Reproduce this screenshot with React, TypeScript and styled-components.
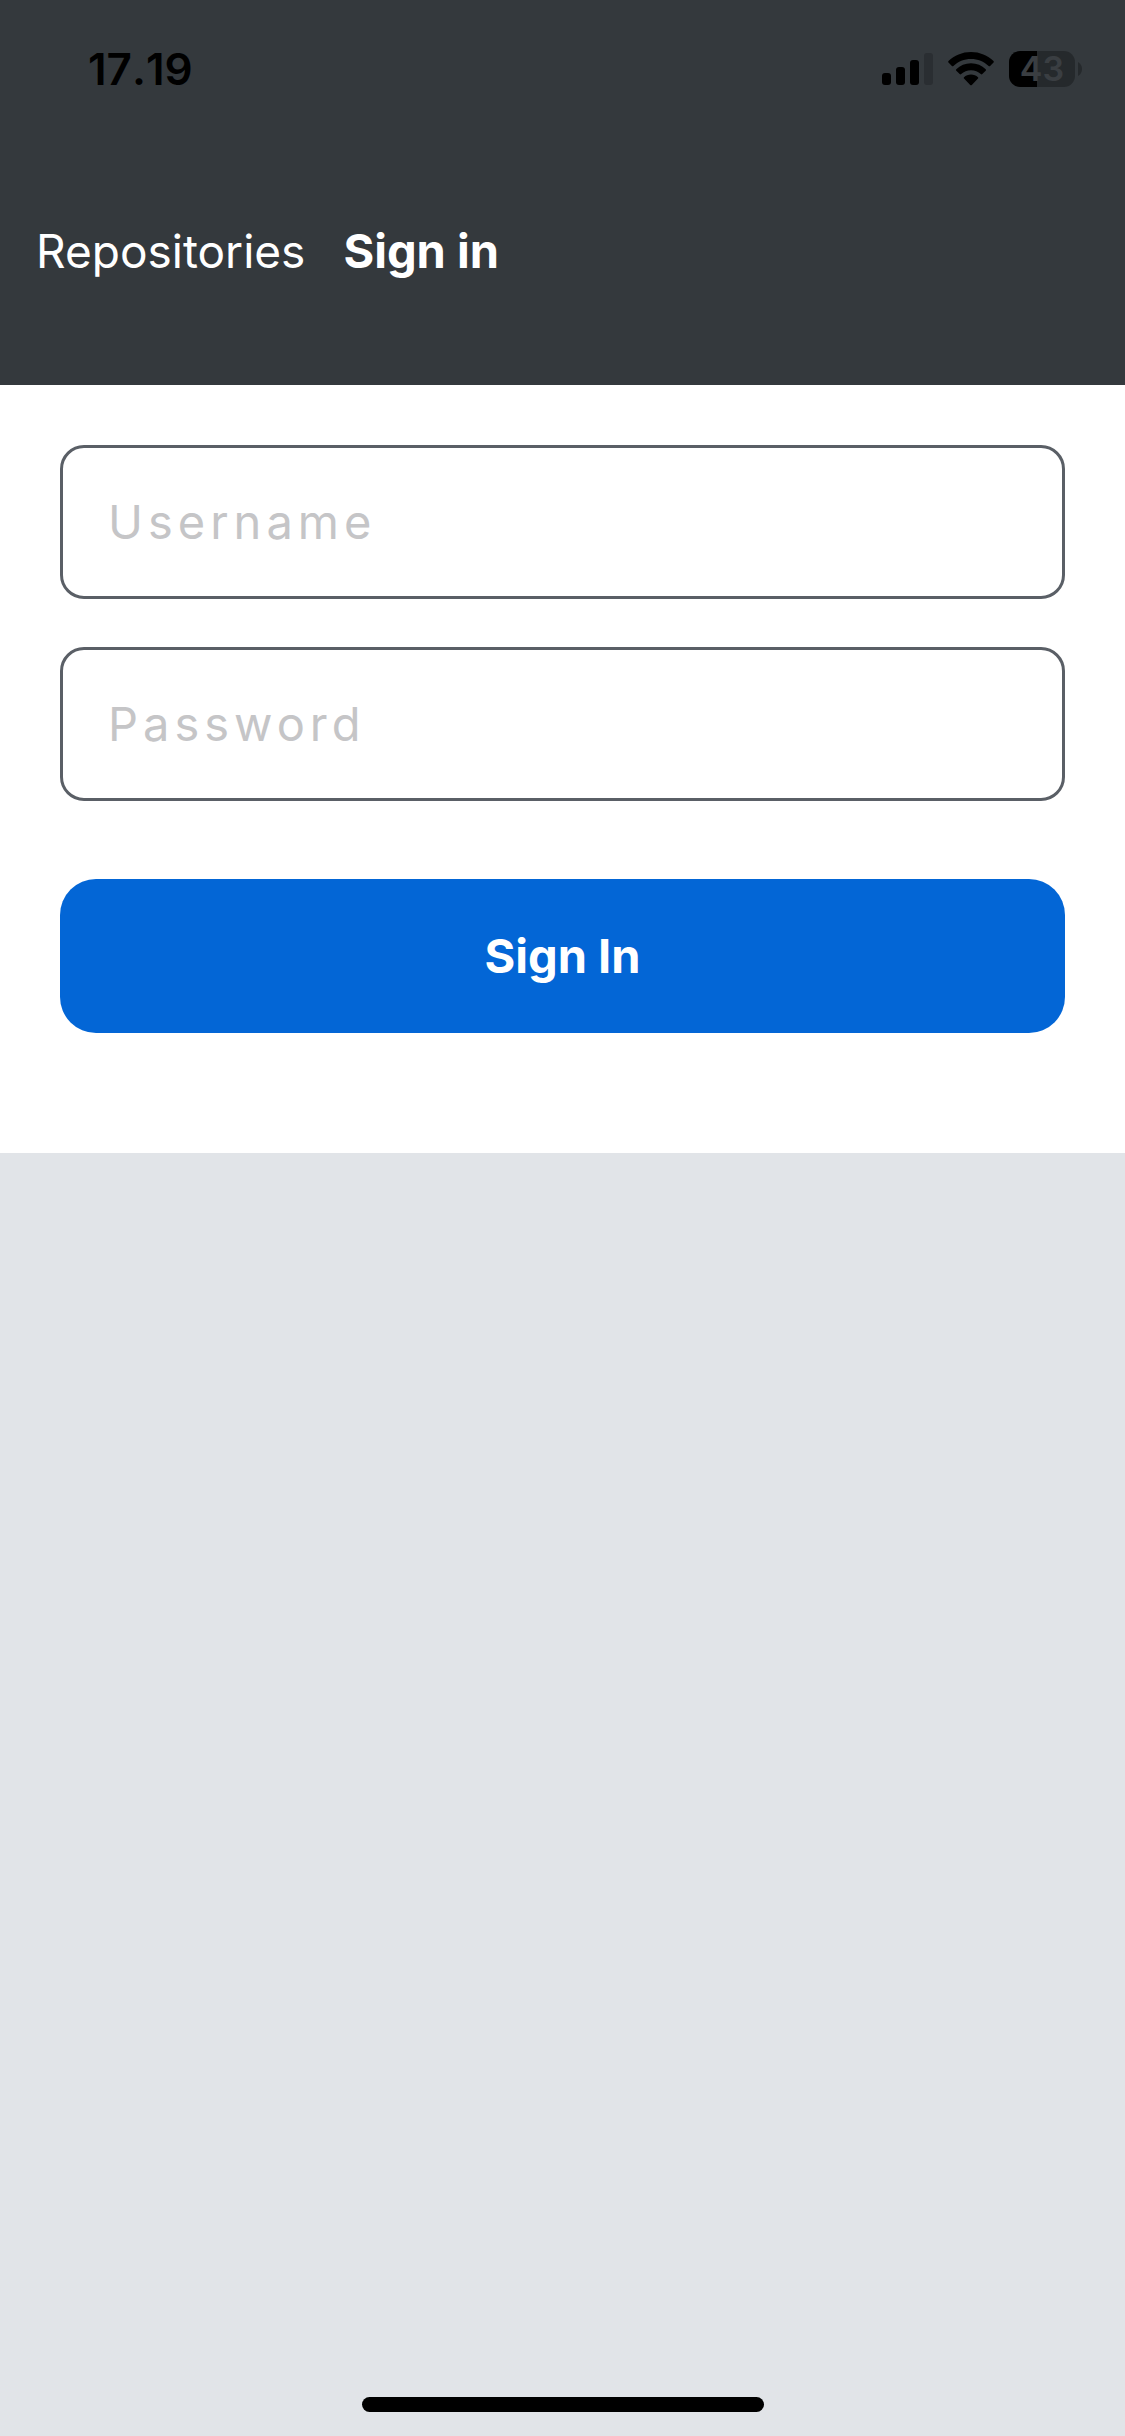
import React, { useState } from "react";
import styled, { createGlobalStyle } from "styled-components";

const theme = {
  bar: "#34393d",
  page: "#e1e4e8",
  primary: "#0366d6",
  border: "#5a5f66",
  placeholder: "#c5c5c7",
};

const GlobalStyle = createGlobalStyle`
  *, *::before, *::after { box-sizing: border-box; }
  body {
    margin: 0;
    background: ${theme.page};
    font-family: Inter, "Liberation Sans", sans-serif;
  }
`;

const Screen = styled.div`
  display: flex;
  flex-direction: column;
  min-height: 100vh;
  background: ${theme.page};
`;

const Header = styled.header`
  background: ${theme.bar};
`;

const StatusBar = styled.div`
  display: flex;
  align-items: center;
  justify-content: space-between;
  height: 138px;
  padding: 0 43px 0 88px;
  color: #000;
`;

const Time = styled.time`
  font-size: 44px;
  line-height: 48px;
  font-weight: 600;
  font-kerning: none;
`;

const StatusIcons = styled.div`
  display: flex;
  align-items: center;
  gap: 15px;
`;

const Battery = styled.div`
  display: flex;
  align-items: center;
  gap: 3px;
`;

const BatteryBody = styled.div<{ $level: number }>`
  display: flex;
  align-items: center;
  justify-content: center;
  width: 66px;
  height: 36px;
  border-radius: 11px;
  background: linear-gradient(to right, #000 ${(p) => p.$level}%, #25292c ${(p) => p.$level}%);
  color: #3a3e42;
  font-size: 34px;
  line-height: 36px;
  font-weight: 600;
`;

const Tabs = styled.nav`
  display: flex;
  align-items: center;
  gap: 38px;
  padding: 84px 36px 105px;
`;

const Tab = styled.a<{ $active?: boolean }>`
  color: #fff;
  font-size: ${(p) => (p.$active ? 47 : 46)}px;
  line-height: 58px;
  font-weight: ${(p) => (p.$active ? 700 : 400)};
  text-decoration: none;
  white-space: nowrap;
`;

const Form = styled.form`
  display: flex;
  flex-direction: column;
  gap: 48px;
  padding: 60px 60px 120px;
  background: #fff;
`;

const Field = styled.input`
  width: 100%;
  height: 154px;
  padding: 0 45px 2px;
  border: 3px solid ${theme.border};
  border-radius: 24px;
  background: #fff;
  color: #24292e;
  font-family: inherit;
  font-size: 47px;
  letter-spacing: 5px;
  outline: none;

  &::placeholder {
    color: ${theme.placeholder};
    opacity: 1;
  }
`;

const SubmitButton = styled.button`
  height: 154px;
  margin-top: 30px;
  padding: 0 45px 2px;
  border: 0;
  border-radius: 36px;
  background: ${theme.primary};
  color: #fff;
  font-family: inherit;
  font-size: 47px;
  font-weight: 700;
  cursor: pointer;
`;

const HomeArea = styled.footer`
  display: flex;
  justify-content: center;
  margin-top: auto;
  padding-bottom: 24px;
`;

const HomeIndicator = styled.div`
  width: 402px;
  height: 15px;
  border-radius: 8px;
  background: #000;
`;

function SignalIcon() {
  return (
    <svg width="51" height="32" viewBox="0 0 51 32" aria-hidden="true">
      <rect x="0" y="20" width="9" height="12" rx="3" />
      <rect x="14" y="14" width="9" height="18" rx="3" />
      <rect x="28" y="7" width="9" height="25" rx="3" />
      <rect x="42" y="0" width="9" height="32" rx="3" fill="#2a2e32" />
    </svg>
  );
}

function WifiIcon() {
  return (
    <svg width="46" height="34" viewBox="0 0 46 34" aria-hidden="true">
      <path d="M23 0C31.8 0 39.700 3.400 45.500 9.100Q46.200 9.900 45.500 10.600L42.100 14Q41.400 14.700 40.600 14C36 9.500 29.800 7 23 7S10 9.500 5.400 14Q4.600 14.700 3.900 14L.5 10.600Q-.2 9.900 .5 9.100C6.300 3.400 14.200 0 23 0Z" />
      <path d="M23 11.300C28.700 11.300 33.900 13.500 37.700 17.200Q38.500 18 37.700 18.700L34.300 22.100Q33.600 22.800 32.800 22.100C30.200 19.700 26.800 18.300 23 18.300S15.800 19.700 13.200 22.100Q12.400 22.800 11.700 22.100L8.300 18.700Q7.500 18 8.300 17.200C12.100 13.500 17.300 11.300 23 11.300Z" />
      <path d="M23 22.500C25.700 22.500 28.200 23.500 30 25.200Q30.700 25.900 30 26.600L23.800 32.900Q23 33.600 22.200 32.900L16 26.600Q15.300 25.900 16 25.200C17.800 23.500 20.300 22.500 23 22.500Z" />
    </svg>
  );
}

function BatteryTip() {
  return (
    <svg width="4" height="14" viewBox="0 0 4 14" aria-hidden="true">
      <path d="M0 0Q4 2.500 4 7T0 14Z" fill="#25292c" />
    </svg>
  );
}

export default function App() {
  const [username, setUsername] = useState("");
  const [password, setPassword] = useState("");

  return (
    <Screen>
      <GlobalStyle />
      <Header>
        <StatusBar>
          <Time>17.19</Time>
          <StatusIcons>
            <SignalIcon />
            <WifiIcon />
            <Battery>
              <BatteryBody $level={43}>43</BatteryBody>
              <BatteryTip />
            </Battery>
          </StatusIcons>
        </StatusBar>
        <Tabs>
          <Tab href="#repositories">Repositories</Tab>
          <Tab href="#sign-in" $active aria-current="page">
            Sign in
          </Tab>
        </Tabs>
      </Header>
      <Form onSubmit={(e) => e.preventDefault()}>
        <Field
          aria-label="Username"
          placeholder="Username"
          value={username}
          onChange={(e) => setUsername(e.target.value)}
        />
        <Field
          type="password"
          aria-label="Password"
          placeholder="Password"
          value={password}
          onChange={(e) => setPassword(e.target.value)}
        />
        <SubmitButton type="submit">Sign In</SubmitButton>
      </Form>
      <HomeArea>
        <HomeIndicator />
      </HomeArea>
    </Screen>
  );
}
